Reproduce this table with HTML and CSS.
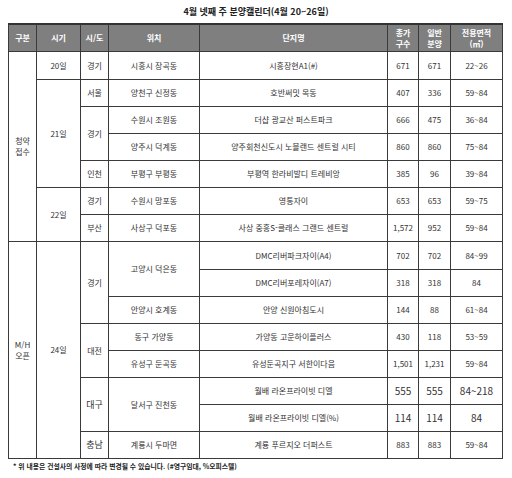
FILE: index.html
```html
<!DOCTYPE html>
<html lang="ko">
<head>
<meta charset="utf-8">
<link rel="stylesheet" href="styles.css">
</head>
<body>
<div class="page">
  <h1 class="title">4월 넷째 주 분양캘린더(4월 20~26일)</h1>
  <table class="cal">
    <colgroup>
      <col class="c-gubun"><col class="c-date"><col class="c-sido"><col class="c-loc"><col class="c-name"><col class="c-total"><col class="c-sale"><col class="c-area">
    </colgroup>
    <thead>
      <tr class="head">
        <th>구분</th><th>시기</th><th>시/도</th><th>위치</th><th>단지명</th><th>총가<br>구수</th><th>일반<br>분양</th><th>전용면적<br>(㎡)</th>
      </tr>
    </thead>
    <tbody>
      <tr class="r28">
        <td rowspan="7">청약<br>접수</td><td>20일</td><td>경기</td><td>시흥시 장곡동</td><td>시흥장현A1(#)</td><td>671</td><td>671</td><td>22~26</td>
      </tr>
      <tr>
        <td rowspan="4">21일</td><td>서울</td><td>양천구 신정동</td><td>호반써밋 목동</td><td>407</td><td>336</td><td>59~84</td>
      </tr>
      <tr>
        <td rowspan="2">경기</td><td>수원시 조원동</td><td>더샵 광교산 퍼스트파크</td><td>666</td><td>475</td><td>36~84</td>
      </tr>
      <tr>
        <td>양주시 덕계동</td><td>양주회천신도시 노블랜드 센트럴 시티</td><td>860</td><td>860</td><td>75~84</td>
      </tr>
      <tr>
        <td>인천</td><td>부평구 부평동</td><td>부평역 한라비발디 트레비앙</td><td>385</td><td>96</td><td>39~84</td>
      </tr>
      <tr>
        <td rowspan="2">22일</td><td>경기</td><td>수원시 망포동</td><td>영통자이</td><td>653</td><td>653</td><td>59~75</td>
      </tr>
      <tr>
        <td>부산</td><td>사상구 덕포동</td><td>사상 중흥S-클래스 그랜드 센트럴</td><td>1,572</td><td>952</td><td>59~84</td>
      </tr>
      <tr class="r28">
        <td rowspan="8">M/H<br>오픈</td><td rowspan="8">24일</td><td rowspan="3">경기</td><td rowspan="2">고양시 덕은동</td><td>DMC리버파크자이(A4)</td><td>702</td><td>702</td><td>84~99</td>
      </tr>
      <tr>
        <td>DMC리버포레자이(A7)</td><td>318</td><td>318</td><td>84</td>
      </tr>
      <tr>
        <td>안양시 호계동</td><td>안양 신원아침도시</td><td>144</td><td>88</td><td>61~84</td>
      </tr>
      <tr>
        <td rowspan="2">대전</td><td>동구 가양동</td><td>가양동 고운하이플러스</td><td>430</td><td>118</td><td>53~59</td>
      </tr>
      <tr>
        <td>유성구 둔곡동</td><td>유성둔곡지구 서한이다음</td><td>1,501</td><td>1,231</td><td>59~84</td>
      </tr>
      <tr>
        <td rowspan="2" class="mid">대구</td><td rowspan="2">달서구 진천동</td><td>월배 라온프라이빗 디엘</td><td class="num-big">555</td><td class="num-big">555</td><td class="num-big">84~218</td>
      </tr>
      <tr>
        <td>월배 라온프라이빗 디엘(%)</td><td class="num-big">114</td><td class="num-big">114</td><td class="num-big">84</td>
      </tr>
      <tr>
        <td class="mid">충남</td><td>계룡시 두마면</td><td>계룡 푸르지오 더퍼스트</td><td>883</td><td>883</td><td>59~84</td>
      </tr>
    </tbody>
  </table>
  <p class="note">* 위 내용은 건설사의 사정에 따라 변경될 수 있습니다. (#영구임대, %오피스텔)</p>
</div>
</body>
</html>
```
FILE: styles.css
```css
html, body {
  margin: 0;
  padding: 0;
  background: #ffffff;
}
.page {
  width: 512px;
  padding: 0 0 0 8px;
  box-sizing: border-box;
  font-family: "Noto Sans CJK KR", "Noto Sans", sans-serif;
  color: #333333;
}
.title {
  margin: 0;
  height: 23px;
  line-height: 24px;
  font-size: 9px;
  font-weight: 700;
  color: #222222;
  text-align: center;
  padding-right: 8px;
}
.cal {
  border-collapse: collapse;
  table-layout: fixed;
  width: 494px;
}
.c-gubun { width: 28px; }
.c-date { width: 44px; }
.c-sido { width: 28px; }
.c-loc { width: 91px; }
.c-name { width: 188px; }
.c-total { width: 31px; }
.c-sale { width: 32px; }
.c-area { width: 52px; }
.cal th, .cal td {
  border: 1px solid #3a3a3a;
  padding: 0;
  text-align: center;
  vertical-align: middle;
  font-size: 8px;
  line-height: 11px;
  white-space: nowrap;
  overflow: hidden;
}
.cal th {
  background: #7f7f7f;
  color: #ffffff;
  font-weight: 700;
  border-top: 2px solid #333333;
}
.head { height: 27px; }
.cal tbody tr { height: 27px; }
.cal tbody tr.r28 { height: 28px; }
.cal td.mid { font-size: 9px; }
.cal td.num-big { font-size: 10px; }
.note {
  margin: 2px 0 0 5px;
  font-size: 6.8px;
  font-weight: 700;
  color: #222222;
  line-height: 10px;
}
```
